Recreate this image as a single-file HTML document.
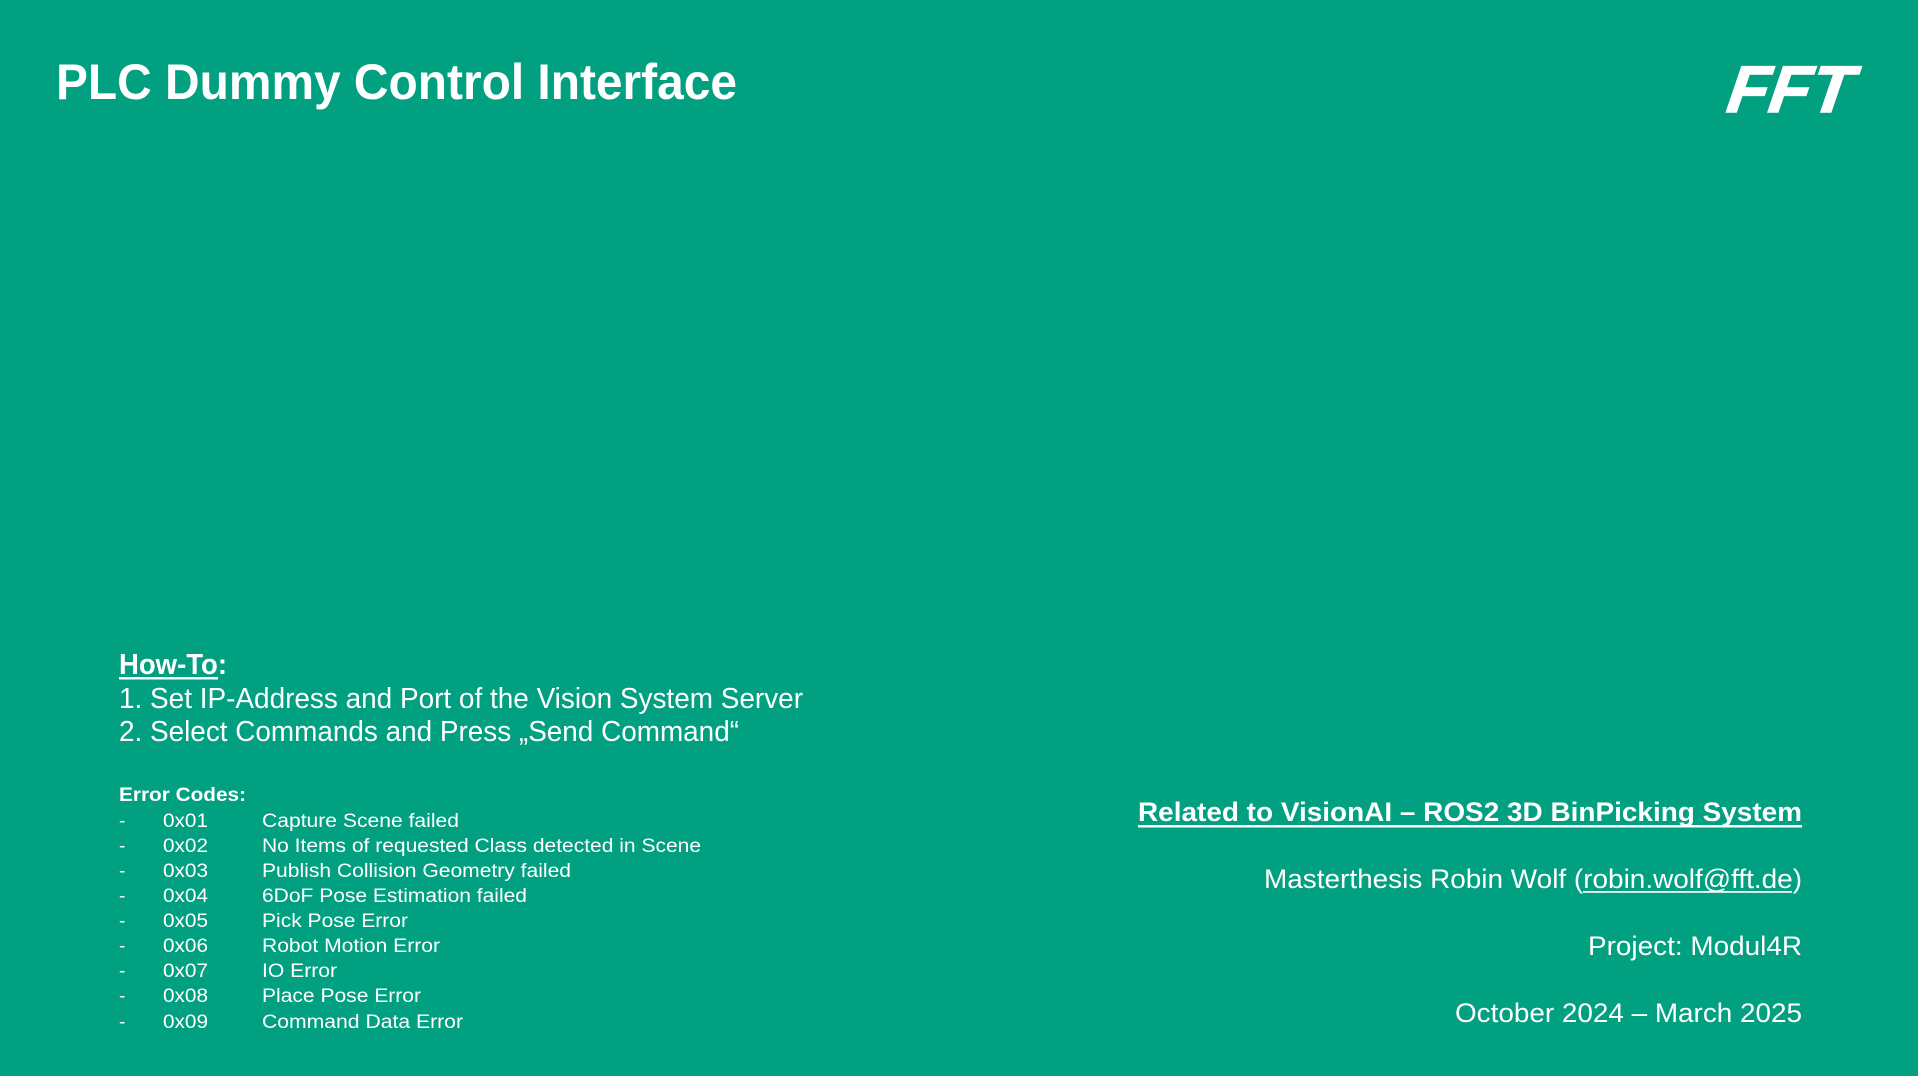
<!DOCTYPE html>
<html><head><meta charset="utf-8"><style>
html,body{margin:0;padding:0;background:#00a080;width:1918px;height:1076px;overflow:hidden}
svg{display:block}
text{font-family:"Liberation Sans",Arial,sans-serif;fill:#fff}
.b{font-weight:bold}
</style></head><body>
<svg width="1918" height="1076" viewBox="0 0 1918 1076" xmlns="http://www.w3.org/2000/svg">
<rect width="1918" height="1076" fill="#00a080"/>
<text class="b" x="56" y="99" font-size="50" textLength="681" lengthAdjust="spacingAndGlyphs">PLC Dummy Control Interface</text>
<text class="b" x="1727" y="112" font-size="66" font-style="italic" textLength="125" lengthAdjust="spacingAndGlyphs" stroke="#fff" stroke-width="1.5" transform="skewX(-8) translate(14,0)">FFT</text>

<text class="b" x="119" y="674" font-size="29" textLength="108" lengthAdjust="spacingAndGlyphs">How-To:</text>
<rect x="119" y="677" width="99" height="2.5" fill="#fff"/>
<text x="119" y="708" font-size="29" textLength="684" lengthAdjust="spacingAndGlyphs">1. Set IP-Address and Port of the Vision System Server</text>
<text x="119" y="741" font-size="29" textLength="620" lengthAdjust="spacingAndGlyphs">2. Select Commands and Press „Send Command“</text>

<text class="b" x="119" y="801" font-size="19" textLength="127" lengthAdjust="spacingAndGlyphs">Error Codes:</text>
<g font-size="19">
<text x="119" y="827">-</text><text x="163" y="827" textLength="45" lengthAdjust="spacingAndGlyphs">0x01</text><text x="262" y="827" textLength="197" lengthAdjust="spacingAndGlyphs">Capture Scene failed</text>
<text x="119" y="852">-</text><text x="163" y="852" textLength="45" lengthAdjust="spacingAndGlyphs">0x02</text><text x="262" y="852" textLength="439" lengthAdjust="spacingAndGlyphs">No Items of requested Class detected in Scene</text>
<text x="119" y="877">-</text><text x="163" y="877" textLength="45" lengthAdjust="spacingAndGlyphs">0x03</text><text x="262" y="877" textLength="309" lengthAdjust="spacingAndGlyphs">Publish Collision Geometry failed</text>
<text x="119" y="902">-</text><text x="163" y="902" textLength="45" lengthAdjust="spacingAndGlyphs">0x04</text><text x="262" y="902" textLength="265" lengthAdjust="spacingAndGlyphs">6DoF Pose Estimation failed</text>
<text x="119" y="927">-</text><text x="163" y="927" textLength="45" lengthAdjust="spacingAndGlyphs">0x05</text><text x="262" y="927" textLength="146" lengthAdjust="spacingAndGlyphs">Pick Pose Error</text>
<text x="119" y="952">-</text><text x="163" y="952" textLength="45" lengthAdjust="spacingAndGlyphs">0x06</text><text x="262" y="952" textLength="178" lengthAdjust="spacingAndGlyphs">Robot Motion Error</text>
<text x="119" y="977">-</text><text x="163" y="977" textLength="45" lengthAdjust="spacingAndGlyphs">0x07</text><text x="262" y="977" textLength="75" lengthAdjust="spacingAndGlyphs">IO Error</text>
<text x="119" y="1002">-</text><text x="163" y="1002" textLength="45" lengthAdjust="spacingAndGlyphs">0x08</text><text x="262" y="1002" textLength="159" lengthAdjust="spacingAndGlyphs">Place Pose Error</text>
<text x="119" y="1028">-</text><text x="163" y="1028" textLength="45" lengthAdjust="spacingAndGlyphs">0x09</text><text x="262" y="1028" textLength="201" lengthAdjust="spacingAndGlyphs">Command Data Error</text>
</g>

<text class="b" x="1138" y="821" font-size="27" textLength="664" lengthAdjust="spacingAndGlyphs">Related to VisionAI – ROS2 3D BinPicking System</text>
<rect x="1138" y="825" width="664" height="2.5" fill="#fff"/>
<text x="1264" y="888" font-size="27" textLength="538" lengthAdjust="spacingAndGlyphs">Masterthesis Robin Wolf (robin.wolf@fft.de)</text>
<rect x="1583" y="891" width="209" height="1.8" fill="#fff"/>
<text x="1588" y="955" font-size="27" textLength="214" lengthAdjust="spacingAndGlyphs">Project: Modul4R</text>
<text x="1455" y="1022" font-size="27" textLength="347" lengthAdjust="spacingAndGlyphs">October 2024 – March 2025</text>
</svg>
</body></html>
